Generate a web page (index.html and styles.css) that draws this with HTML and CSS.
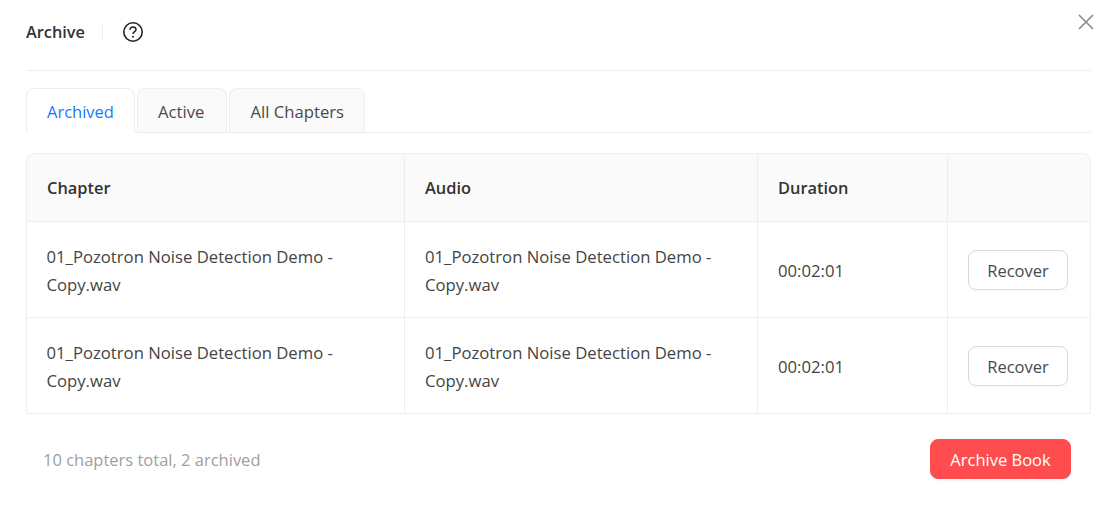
FILE: index.html
```html
<!DOCTYPE html>
<html lang="en">
  <head>
    <meta charset="UTF-8" />
    <meta name="viewport" content="width=device-width, initial-scale=1.0" />
    <title>Archive</title>
    <link rel="stylesheet" href="styles.css">
  </head>
  <body>
    <div class="modal">
      <button class="close" aria-label="Close">
        <svg width="18" height="18" viewBox="0 0 18 18">
          <path d="M2 2 L16 16 M16 2 L2 16" stroke="#8c8c8c" stroke-width="1.7" fill="none" />
        </svg>
      </button>
      <header class="modal-head">
        <span class="modal-title">Archive</span>
        <span class="head-line"></span>
        <svg class="help" width="22" height="22" viewBox="0 0 22 22">
          <circle cx="11" cy="11" r="9.2" stroke="#222" stroke-width="1.6" fill="none" />
          <path d="M8 8.8 C8 6.9 9.4 5.9 11 5.9 C12.7 5.9 14 7 14 8.5 C14 10.6 11 10.7 11 13" stroke="#222" stroke-width="1.5" fill="none" />
          <circle cx="11" cy="15.8" r="1" fill="#222" />
        </svg>
      </header>

      <div class="tabs">
        <div class="tab tab-active">Archived</div>
        <div class="tab">Active</div>
        <div class="tab">All Chapters</div>
      </div>

      <table class="chapters">
        <colgroup>
          <col class="col-chapter" />
          <col class="col-audio" />
          <col class="col-duration" />
          <col class="col-action" />
        </colgroup>
        <thead>
          <tr>
            <th>Chapter</th>
            <th>Audio</th>
            <th>Duration</th>
            <th></th>
          </tr>
        </thead>
        <tbody>
          <tr>
            <td class="cell-text">01_Pozotron Noise Detection Demo - Copy.wav</td>
            <td class="cell-text">01_Pozotron Noise Detection Demo - Copy.wav</td>
            <td class="cell-text">00:02:01</td>
            <td><button class="btn">Recover</button></td>
          </tr>
          <tr>
            <td class="cell-text">01_Pozotron Noise Detection Demo - Copy.wav</td>
            <td class="cell-text">01_Pozotron Noise Detection Demo - Copy.wav</td>
            <td class="cell-text">00:02:01</td>
            <td><button class="btn">Recover</button></td>
          </tr>
        </tbody>
      </table>

      <footer class="modal-foot">
        <span class="total">10 chapters total, 2 archived</span>
        <button class="btn btn-danger">Archive Book</button>
      </footer>
    </div>
  </body>
</html>
```

FILE: styles.css
```css
body {
  margin: 0;
  width: 1114px;
  height: 523px;
  overflow: hidden;
  background: #fff;
  font-family: "Open Sans", "Noto Sans", sans-serif;
  color: #444;
}
.modal {
  position: relative;
  box-sizing: border-box;
  height: 523px;
  padding: 0 23px 0 26px;
}
.close {
  position: absolute;
  top: 13px;
  right: 19px;
  width: 18px;
  height: 18px;
  padding: 0;
  border: 0;
  background: none;
}

/* Header */
.modal-head {
  display: flex;
  align-items: center;
  height: 64px;
  padding-bottom: 6px;
  border-bottom: 1px solid #eee;
}
.modal-title {
  font-size: 16.3px;
  font-weight: 600;
  color: #333;
}
.head-line {
  width: 1px;
  height: 16px;
  margin: 0 19px 0 17px;
  background: #eee;
}
.help {
  display: block;
}

/* Tabs */
.tabs {
  display: flex;
  gap: 2px;
  margin-top: 17px;
  height: 44px;
  border-bottom: 1px solid #eee;
}
.tab {
  box-sizing: border-box;
  height: 44px;
  padding: 0 22px 0 20px;
  line-height: 46px;
  font-size: 16.7px;
  color: #4a4a4a;
  background: #fafafa;
  border: 1px solid #eee;
  border-bottom: 0;
  border-radius: 8px 8px 0 0;
}
.tab + .tab + .tab {
  padding: 0 20px;
}
.tab-active {
  height: 45px;
  padding: 0 20px;
  font-size: 16.5px;
  color: #1677ff;
  background: #fff;
}

/* Table */
.chapters {
  width: 1065px;
  margin-top: 20px;
  table-layout: fixed;
  border-collapse: separate;
  border-spacing: 0;
  font-size: 16.7px;
  line-height: 28px;
}
.col-chapter { width: 378px; }
.col-audio { width: 353px; }
.col-duration { width: 190px; }
.col-action { width: 144px; }
.chapters th {
  height: 67px;
  padding: 0 20px;
  text-align: left;
  font-size: 16.4px;
  font-weight: 600;
  color: #333;
  background: #fafafa;
  border-top: 1px solid #eee;
  border-bottom: 1px solid #eee;
  border-left: 1px solid #eee;
}
.chapters th:first-child { border-top-left-radius: 8px; }
.chapters th:last-child {
  border-top-right-radius: 8px;
  border-right: 1px solid #eee;
}
.chapters td {
  height: 95px;
  padding: 0 20px;
  border-bottom: 1px solid #eee;
  border-left: 1px solid #eee;
}
.chapters td:first-child { padding-left: 19.5px; }
.chapters td:last-child { border-right: 1px solid #eee; }
.chapters .cell-text {
  height: 93px;
  padding-top: 2px;
}

/* Buttons */
.btn {
  box-sizing: border-box;
  width: 100px;
  height: 40px;
  padding: 1px 0 0;
  font-family: inherit;
  font-size: 16.5px;
  color: #4a4a4a;
  background: #fff;
  border: 1px solid #d9d9d9;
  border-radius: 8px;
  box-shadow: 0 2px 0 rgba(0, 0, 0, 0.02);
}
.btn-danger {
  width: 141px;
  padding: 0;
  color: #fff;
  background: #ff4d4f;
  border-color: #ff4d4f;
}

/* Footer */
.modal-foot {
  display: flex;
  align-items: center;
  justify-content: space-between;
  margin-top: 25px;
  padding: 0 20px 0 17px;
}
.total {
  font-size: 16.5px;
  color: #a0a0a0;
}
```
